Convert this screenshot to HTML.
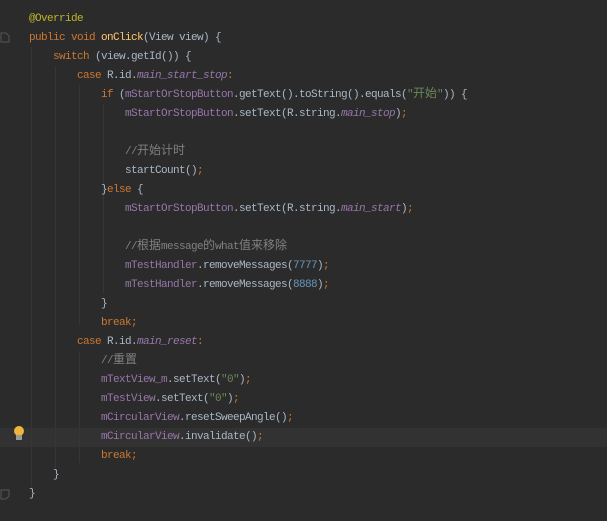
<!DOCTYPE html>
<html><head><meta charset="utf-8"><style>
body{margin:0;width:607px;height:521px;background:#2b2b2b;overflow:hidden;position:relative;color:#a9b7c6}
.l{position:absolute;height:19px;line-height:19px;white-space:pre;font-family:"Liberation Mono","Courier New","DejaVu Sans Mono",Courier,monospace;font-size:11px;letter-spacing:-0.6px}
.c{font-family:"Noto Sans CJK SC","WenQuanYi Zen Hei",sans-serif;font-size:12px;letter-spacing:0;line-height:0}
.k{color:#cc7832}.a{color:#bbb529}.m{color:#ffc66d}.f{color:#9876aa}.fi{color:#9876aa;font-style:italic}.cm{color:#808080}.s{color:#6a8759}.n{color:#6897bb}
.g{position:absolute;width:1px;background:#363636}
.ch{display:inline-block;width:6px;text-align:center;letter-spacing:0}
.cw{display:inline-block;width:12px;text-align:center;letter-spacing:0}
</style></head><body>
<div style="position:absolute;left:0;top:428px;width:607px;height:19px;background:#323232"></div>
<div class="g" style="left:31px;top:47px;height:440px"></div>
<div class="g" style="left:55px;top:66px;height:402px"></div>
<div class="g" style="left:79px;top:85px;height:240px"></div>
<div class="g" style="left:79px;top:351px;height:112px"></div>
<div class="g" style="left:103px;top:104px;height:190px"></div>
<svg style="position:absolute;left:0;top:32px" width="10" height="12"><path d="M1 1H6L9 4V10H1Z" fill="none" stroke="#555"/></svg>
<svg style="position:absolute;left:0;top:488px" width="10" height="12"><path d="M1 11H6L9 8V2H1Z" fill="none" stroke="#555"/></svg>
<svg style="position:absolute;left:12px;top:425px" width="14" height="16"><circle cx="7" cy="6" r="5" fill="#f0b43c"/><rect x="4" y="10" width="6" height="5" fill="#999"/></svg>
<div class="l" style="left:29px;top:10px"><span class="a">@Override</span></div>
<div class="l" style="left:29px;top:29px"><span class="k">public void </span><span class="m">onClick</span>(View view) {</div>
<div class="l" style="left:53px;top:48px"><span class="k">switch </span>(view.getId()) {</div>
<div class="l" style="left:77px;top:67px"><span class="k">case </span>R.id.<span class="fi">main_start_stop</span><span class="k">:</span></div>
<div class="l" style="left:101px;top:86px"><span class="k">if </span>(<span class="f">mStartOrStopButton</span>.getText().toString().equals(<span class="s">"<span class="c">开始</span>"</span>)) {</div>
<div class="l" style="left:125px;top:105px"><span class="f">mStartOrStopButton</span>.setText(R.string.<span class="fi">main_stop</span>)<span class="k">;</span></div>
<div class="l" style="left:125px;top:143px"><span class="cm">//<span class="c">开始计时</span></span></div>
<div class="l" style="left:125px;top:162px">startCount()<span class="k">;</span></div>
<div class="l" style="left:101px;top:181px">}<span class="k">else </span>{</div>
<div class="l" style="left:125px;top:200px"><span class="f">mStartOrStopButton</span>.setText(R.string.<span class="fi">main_start</span>)<span class="k">;</span></div>
<div class="l" style="left:125px;top:238px"><span class="cm">//<span class="c">根据</span>message<span class="c">的</span>what<span class="c">值来移除</span></span></div>
<div class="l" style="left:125px;top:257px"><span class="f">mTestHandler</span>.removeMessages(<span class="n">7777</span>)<span class="k">;</span></div>
<div class="l" style="left:125px;top:276px"><span class="f">mTestHandler</span>.removeMessages(<span class="n">8888</span>)<span class="k">;</span></div>
<div class="l" style="left:101px;top:295px">}</div>
<div class="l" style="left:101px;top:314px"><span class="k">break;</span></div>
<div class="l" style="left:77px;top:333px"><span class="k">case </span>R.id.<span class="fi">main_reset</span><span class="k">:</span></div>
<div class="l" style="left:101px;top:352px"><span class="cm">//<span class="c">重置</span></span></div>
<div class="l" style="left:101px;top:371px"><span class="f">mTextView_m</span>.setText(<span class="s">"0"</span>)<span class="k">;</span></div>
<div class="l" style="left:101px;top:390px"><span class="f">mTestView</span>.setText(<span class="s">"0"</span>)<span class="k">;</span></div>
<div class="l" style="left:101px;top:409px"><span class="f">mCircularView</span>.resetSweepAngle()<span class="k">;</span></div>
<div class="l" style="left:101px;top:428px"><span class="f">mCircularView</span>.invalidate()<span class="k">;</span></div>
<div class="l" style="left:101px;top:447px"><span class="k">break;</span></div>
<div class="l" style="left:53px;top:466px">}</div>
<div class="l" style="left:29px;top:485px">}</div>
<script>
(function(){
  var walk=function(n){
    var kids=Array.prototype.slice.call(n.childNodes);
    kids.forEach(function(k){
      if(k.nodeType===3){
        var f=document.createDocumentFragment();
        for(var i=0;i<k.data.length;i++){
          var ch=k.data[i],s=document.createElement('span');
          s.className=ch.charCodeAt(0)>0x2e80?'cw':'ch';
          s.textContent=ch;f.appendChild(s);
        }
        n.replaceChild(f,k);
      } else if(k.nodeType===1) walk(k);
    });
  };
  document.querySelectorAll('.l').forEach(walk);
})();
</script>
</body></html>
